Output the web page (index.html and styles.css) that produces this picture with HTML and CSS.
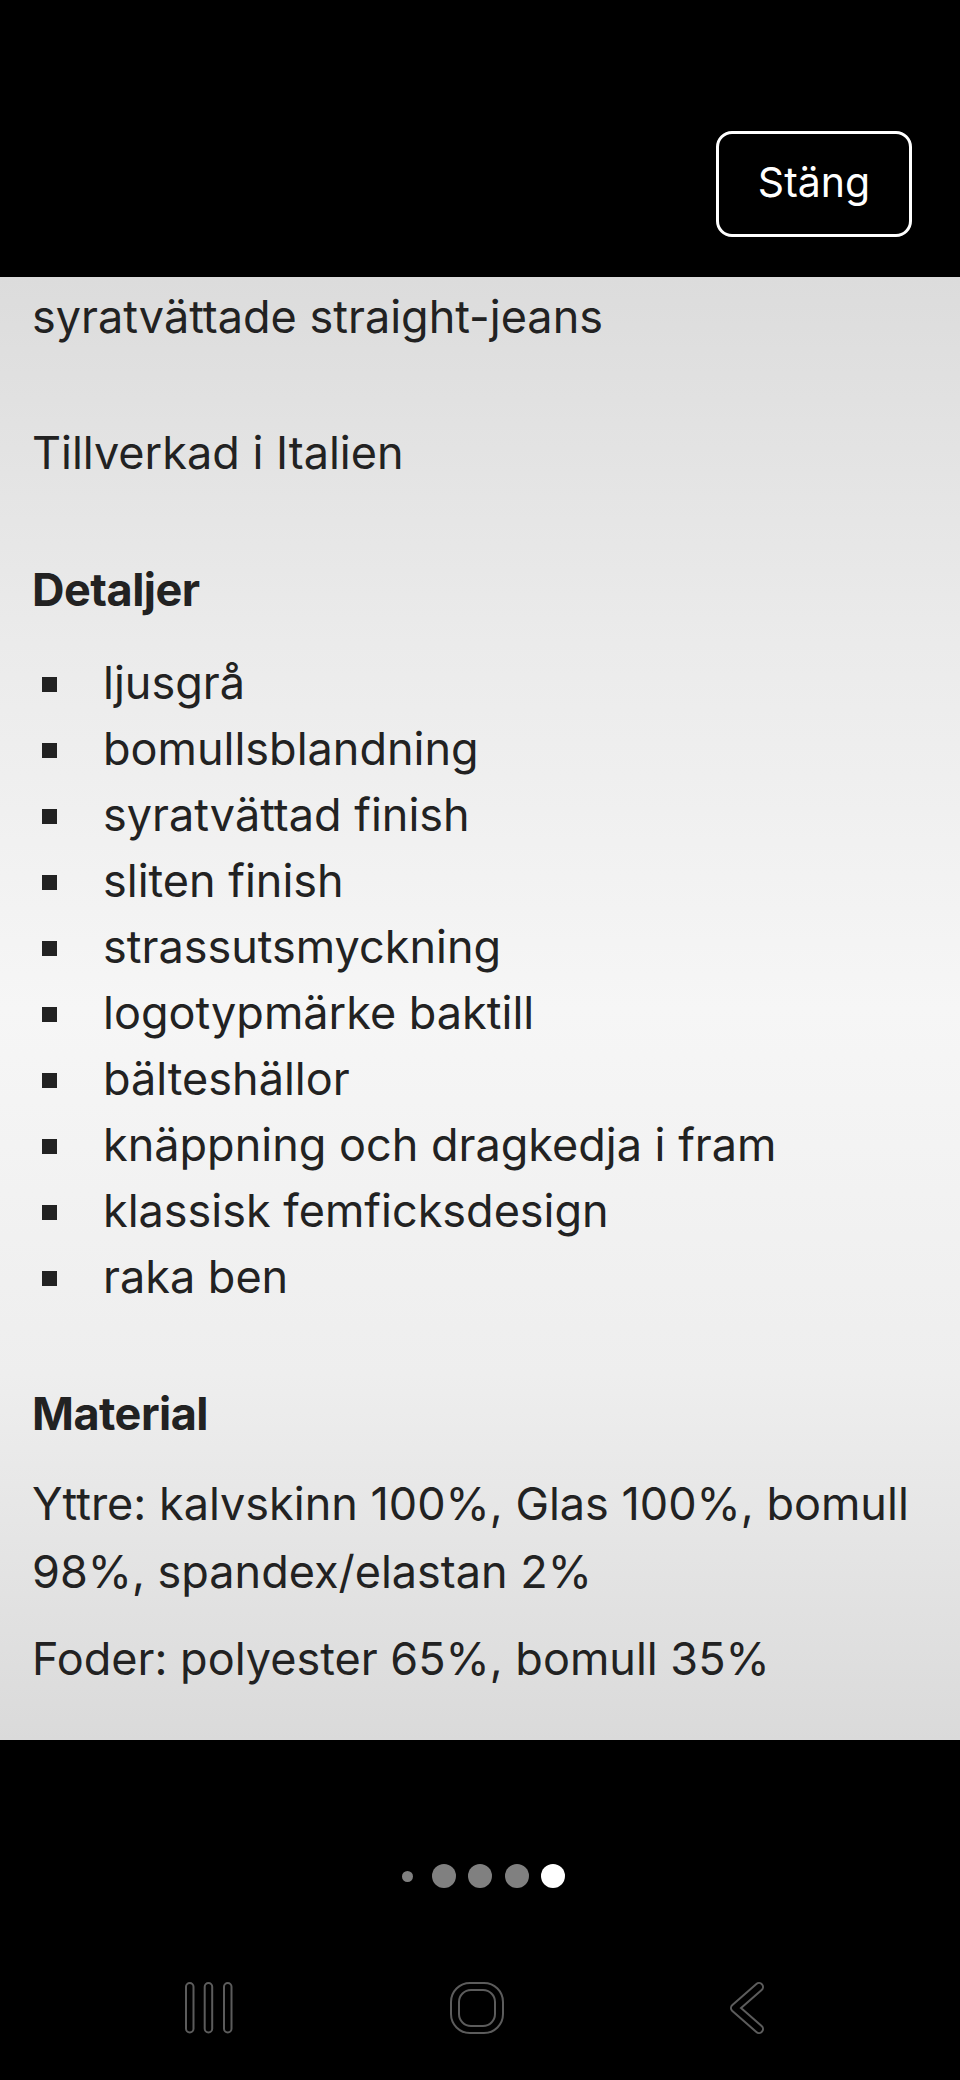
FILE: index.html
```html
<!DOCTYPE html>
<html lang="sv">
<head>
<meta charset="utf-8">
<link rel="stylesheet" href="styles.css">
</head>
<body>
<div class="screen">
  <header class="topbar">
    <button class="close">Stäng</button>
  </header>
  <main class="content">
    <p class="title">syratvättade straight-jeans</p>
    <p class="origin">Tillverkad i Italien</p>
    <h2 class="heading">Detaljer</h2>
    <ul class="details">
      <li>ljusgrå</li>
      <li>bomullsblandning</li>
      <li>syratvättad finish</li>
      <li>sliten finish</li>
      <li>strassutsmyckning</li>
      <li>logotypmärke baktill</li>
      <li>bälteshällor</li>
      <li>knäppning och dragkedja i fram</li>
      <li>klassisk femficksdesign</li>
      <li>raka ben</li>
    </ul>
    <h2 class="heading heading-material">Material</h2>
    <p class="material">Yttre: kalvskinn 100%, Glas 100%, bomull 98%, spandex/elastan 2%</p>
    <p class="material lining">Foder: polyester 65%, bomull 35%</p>
  </main>
  <div class="pager">
    <span class="slot"><span class="dot dot-small"></span></span>
    <span class="slot"><span class="dot"></span></span>
    <span class="slot"><span class="dot"></span></span>
    <span class="slot"><span class="dot"></span></span>
    <span class="slot"><span class="dot dot-active"></span></span>
  </div>
  <nav class="navbar">
    <svg class="nav-icon" width="48" height="52" viewBox="0 0 48 52" fill="none" stroke="#5c5c5c" stroke-width="2">
      <rect x="1" y="1" width="7.5" height="49.5" rx="3.75"/>
      <rect x="19.7" y="1" width="7.5" height="49.5" rx="3.75"/>
      <rect x="39" y="1" width="7.5" height="49.5" rx="3.75"/>
    </svg>
    <svg class="nav-icon" width="54" height="52" viewBox="0 0 54 52" fill="none" stroke="#5c5c5c" stroke-width="2">
      <rect x="1" y="1" width="52" height="50" rx="19"/>
      <rect x="9" y="8" width="36" height="36" rx="12"/>
    </svg>
    <svg class="nav-icon nav-back" width="36" height="52" viewBox="0 0 36 52" fill="none" stroke-linecap="round" stroke-linejoin="round">
      <path d="M30 5 L6 26 L30 47" stroke="#5c5c5c" stroke-width="10"/>
      <path d="M30 5 L6 26 L30 47" stroke="#000" stroke-width="6"/>
    </svg>
  </nav>
</div>
</body>
</html>
```
FILE: styles.css
```css
html, body {
  margin: 0;
  padding: 0;
  background: #000;
}
.screen {
  width: 960px;
  height: 2080px;
  display: flex;
  flex-direction: column;
  background: #000;
  font-family: Inter, Roboto, "Noto Sans", sans-serif;
}
.topbar {
  height: 277px;
  box-sizing: border-box;
  display: flex;
  justify-content: flex-end;
  align-items: flex-start;
  padding: 131px 48px 0 0;
}
.close {
  width: 196px;
  height: 106px;
  box-sizing: border-box;
  border: 3px solid #fff;
  border-radius: 16px;
  background: #000;
  color: #fff;
  font-family: Inter, Roboto, sans-serif;
  font-size: 41px;
  font-weight: 400;
  padding: 0 0 4px 0;
}
.content {
  height: 1463px;
  box-sizing: border-box;
  padding: 13px 32px 0 32px;
  background: linear-gradient(180deg, #dcdcdc 0%, #ebebeb 25%, #f6f6f6 50%, #eeeeee 75%, #dadada 100%);
  color: #222;
  font-size: 45px;
}
.content p, .content h2, .content ul {
  margin: 0;
}
.title {
  line-height: 54px;
}
.origin {
  line-height: 54px;
  margin-top: 82px !important;
}
.heading {
  font-size: 45px;
  font-weight: 700;
  line-height: 54px;
  margin-top: 83px !important;
  letter-spacing: -0.5px;
}
.heading-material {
  margin-top: 77px !important;
}
.details {
  list-style: none;
  padding: 0;
  margin-top: 33px !important;
}
.details li {
  position: relative;
  line-height: 66px;
  padding-left: 71px;
}
.details li::before {
  content: "";
  position: absolute;
  left: 10px;
  top: 27px;
  width: 15px;
  height: 15px;
  background: #222;
}
.material {
  line-height: 68px;
  margin-top: 29px !important;
}
.lining {
  margin-top: 19px !important;
}
.pager {
  height: 148px;
  box-sizing: border-box;
  padding-top: 124px;
  display: flex;
  justify-content: center;
  align-items: flex-start;
  gap: 12.5px;
}
.slot {
  width: 24px;
  height: 24px;
  display: flex;
  align-items: center;
  justify-content: center;
}
.dot {
  width: 24px;
  height: 24px;
  border-radius: 50%;
  background: #808080;
}
.dot-small {
  width: 11px;
  height: 11px;
}
.dot-active {
  background: #fff;
}
.navbar {
  flex: 1;
  display: flex;
  align-items: flex-start;
  gap: 217px;
  padding: 94px 0 0 185px;
}
.nav-icon {
  display: block;
}
.nav-back {
  margin-left: 8px;
}
```
